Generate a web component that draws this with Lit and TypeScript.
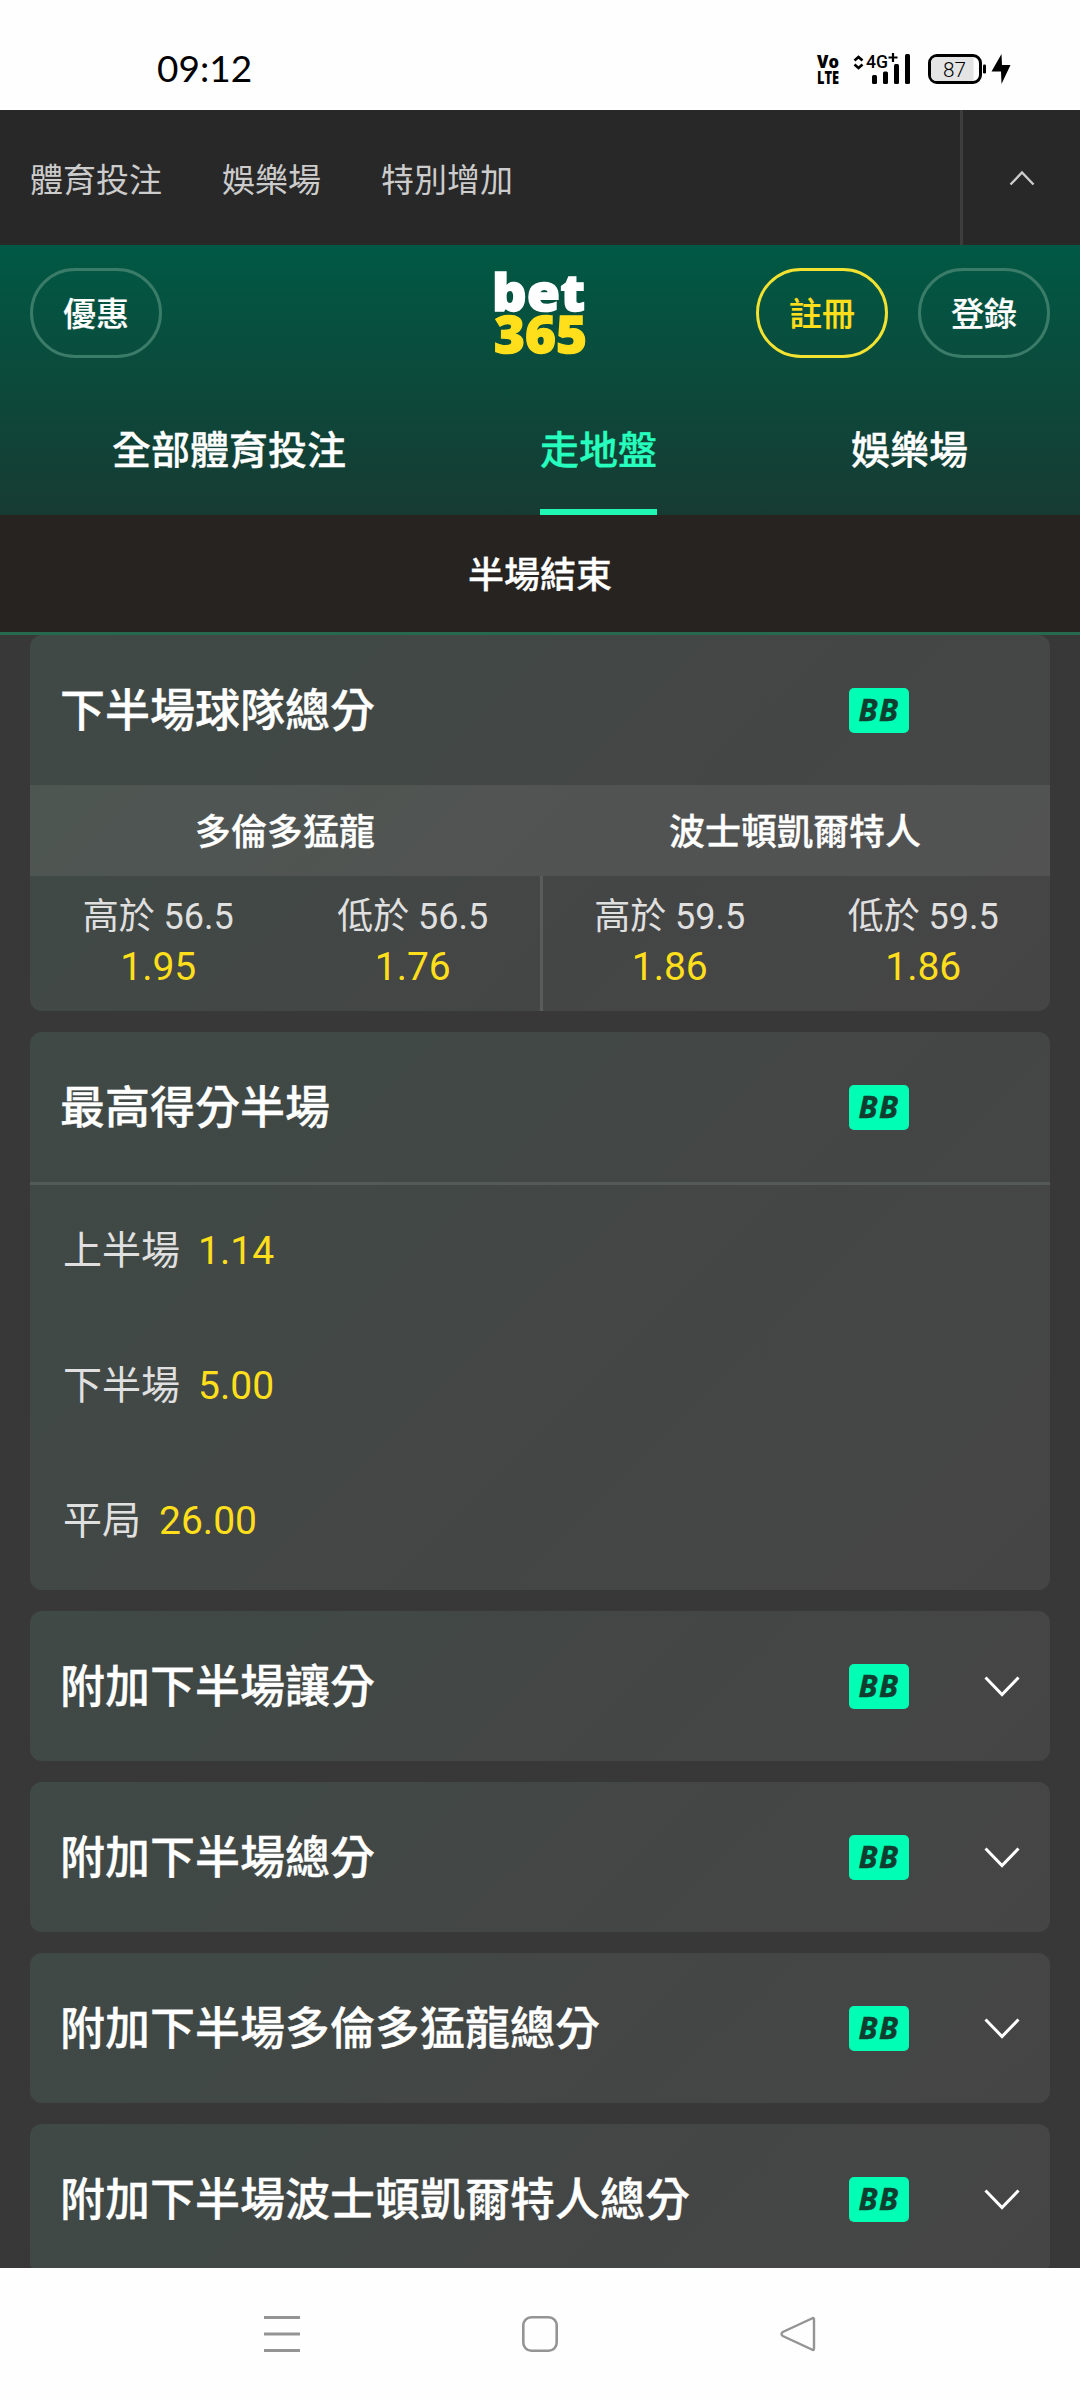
import { LitElement, html, css, nothing } from "lit";
import { customElement, property } from "lit/decorators.js";

@customElement("bb-badge")
class BbBadge extends LitElement {
  static styles = css`
    :host { display: block; width: 60px; height: 45px; }
    .badge { display: block; overflow: visible; }
    .letters { font-family: "Open Sans", sans-serif; font-weight: 700; font-style: italic; font-size: 31px; fill: #0f3d2f; stroke: #0f3d2f; stroke-width: 0.5px; letter-spacing: 1.5px; }
  `;
  render() {
    return html`<svg class="badge" width="60" height="45" viewBox="0 0 60 45">
      <rect width="60" height="45" rx="5" fill="#00ffb4" />
      <text class="letters" x="9.5" y="33" textLength="41" lengthAdjust="spacingAndGlyphs">BB</text>
    </svg>`;
  }
}

@customElement("market-card")
class MarketCard extends LitElement {
  @property() name = "";
  @property({ type: Boolean }) collapsed = false;

  static styles = css`
    :host { display: block; flex: none; }
    .card {
      border-radius: 12px;
      overflow: hidden;
      background: linear-gradient(135deg, #3f4945 0%, #414845 30%, #444645 60%, #454545 100%);
    }
    .head { display: flex; align-items: center; height: 150px; padding: 0 30px; }
    .name { flex: 1; padding-top: 3px; font-size: 45px; line-height: 60px; font-weight: 500; color: #fff; white-space: nowrap; -webkit-text-stroke: 0.3px currentColor; }
    .toggle { display: flex; width: 111px; justify-content: flex-end; }
    .chevron { display: block; }
  `;
  render() {
    return html`<section class="card">
      <header class="head">
        <div class="name">${this.name}</div>
        <bb-badge></bb-badge>
        <div class="toggle">
          ${this.collapsed
            ? html`<svg class="chevron" width="36" height="22" viewBox="0 0 36 22">
                <path d="M1.5 2.5 18 19.5 34.5 2.5" fill="none" stroke="#fff" stroke-width="3" />
              </svg>`
            : nothing}
        </div>
      </header>
      <slot></slot>
    </section>`;
  }
}

const TEAMS = [
  { team: "多倫多猛龍", picks: [["高於 56.5", "1.95"], ["低於 56.5", "1.76"]] },
  { team: "波士頓凱爾特人", picks: [["高於 59.5", "1.86"], ["低於 59.5", "1.86"]] },
];
const HALVES = [["上半場", "1.14"], ["下半場", "5.00"], ["平局", "26.00"]];
const MORE = ["附加下半場讓分", "附加下半場總分", "附加下半場多倫多猛龍總分", "附加下半場波士頓凱爾特人總分"];

@customElement("app-root")
class AppRoot extends LitElement {
  static styles = css`
    :host {
      display: flex;
      flex-direction: column;
      width: 1080px;
      height: 2400px;
      overflow: hidden;
      background: #383838;
      font-family: Roboto, "Noto Sans CJK TC", sans-serif;
    }
    .status { display: flex; flex: none; height: 110px; background: #fefefe; align-items: center; justify-content: space-between; padding: 28px 68px 0 157px; box-sizing: border-box; }
    .status svg { overflow: visible; }
    .clock { padding-bottom: 3px; font-family: Lato, sans-serif; font-size: 37px; line-height: 44px; color: #000; }
    .tiny { font-family: "Open Sans", sans-serif; font-weight: 800; font-size: 18px; }
    .net { font-family: Roboto, sans-serif; font-weight: 500; font-size: 18.5px; }
    .level { font-family: Roboto, sans-serif; font-weight: 300; font-size: 21px; }
    .products { display: flex; flex: none; height: 135px; background: #282828; align-items: stretch; }
    .links { display: flex; flex: 1; align-items: center; gap: 60px; padding-left: 30px; font-size: 33px; color: #ccc; }
    .up { display: flex; width: 117px; border-left: 3px solid #3d3d3d; align-items: center; justify-content: center; }
    .header { display: flex; flex: none; flex-direction: column; height: 270px; background: linear-gradient(#005944, #173b33); }
    .bar { display: grid; grid-template-columns: 1fr 90px 1fr; height: 136px; padding: 0 30px; align-items: center; }
    .side { display: flex; gap: 30px; }
    .end { justify-content: flex-end; }
    .pill { display: flex; box-sizing: border-box; width: 132px; height: 90px; border: 3px solid #3b7c69; border-radius: 45px; align-items: center; justify-content: center; padding-top: 4px; font-size: 33px; line-height: 40px; font-weight: 500; color: #fff; -webkit-text-stroke: 0.2px currentColor; }
    .join { color: #ffdf1b; border-color: #f2e232; }
    .logo { display: block; overflow: visible; }
    .wordmark { font-family: "Open Sans", sans-serif; font-weight: 800; font-size: 51px; }
    .tabs { display: flex; flex: 1; justify-content: space-between; padding: 0 112px; }
    .tab { display: flex; box-sizing: border-box; align-items: center; font-size: 39px; font-weight: 500; color: #fff; border-bottom: 6px solid transparent; padding-top: 4px; -webkit-text-stroke: 0.3px currentColor; }
    .tab.active { color: #26ffbe; border-bottom-color: #1ff7b2; }
    .period { display: flex; flex: none; box-sizing: border-box; height: 120px; padding-bottom: 3px; border-bottom: 3px solid #27694f; background: #262321; color: #fff; align-items: center; justify-content: center; font-size: 36px; font-weight: 500; -webkit-text-stroke: 0.3px currentColor; }
    .markets { display: flex; flex: 1; min-height: 0; flex-direction: column; gap: 21px; padding: 0 30px; overflow: hidden; }
    .teams { display: flex; }
    .half { display: flex; flex: 1 1 0; flex-direction: column; }
    .team { display: flex; box-sizing: border-box; height: 91px; padding-bottom: 4px; align-items: center; justify-content: center; background: rgba(255, 255, 255, 0.075); font-size: 36px; font-weight: 500; color: #fff; -webkit-text-stroke: 0.3px currentColor; }
    .picks { display: flex; height: 135px; box-sizing: border-box; padding-left: 1px; }
    .half + .half .picks { padding-left: 0; border-left: 3px solid #5a5c5b; }
    .pick { display: flex; flex: 1; flex-direction: column; align-items: center; padding-top: 17px; }
    .label { font-size: 36px; line-height: 48px; color: #e0e0e0; }
    .price { font-size: 39px; line-height: 53px; color: #ffdf1b; }
    .list { border-top: 3px solid #545a57; }
    .row { display: flex; height: 135px; align-items: center; gap: 18px; padding-left: 33px; }
    .row .label, .row .price { font-size: 39px; line-height: 56px; padding-bottom: 3px; }
    .nav { display: flex; flex: none; height: 132px; background: #fefefe; align-items: center; justify-content: center; gap: 222px; }
    .nav svg { display: block; }
  `;

  render() {
    return html`
      <div class="status">
        <div class="clock">09:12</div>
        <svg width="196" height="34" viewBox="816 52 196 34">
          <text class="tiny" x="817" y="68" textLength="22" lengthAdjust="spacingAndGlyphs">Vo</text>
          <text class="tiny" x="817" y="84" textLength="22" lengthAdjust="spacingAndGlyphs">LTE</text>
          <path d="M854.5 60.5 858.5 57 862.5 60.5M854.5 64.5 858.5 68 862.5 64.5" fill="none" stroke="#000" stroke-width="2.6" />
          <text class="net" x="866" y="68" textLength="22" lengthAdjust="spacingAndGlyphs">4G</text>
          <path d="M893 53v9M888.5 57.5h9" stroke="#000" stroke-width="2.2" />
          <rect x="872" y="75" width="5" height="9" rx="1.5" />
          <rect x="883" y="71.5" width="5" height="12.5" rx="1.5" />
          <rect x="894" y="64" width="5" height="20" rx="1.5" />
          <rect x="905" y="54" width="5" height="30" rx="1.5" />
          <rect x="929.5" y="55.5" width="51" height="27" rx="7.5" fill="#fefefe" stroke="#000" stroke-width="3" />
          <path d="M973.5 57v24H937q-6 0-6-6V63q0-6 6-6z" fill="#e4e4e4" />
          <text class="level" x="943" y="76.5" textLength="23" lengthAdjust="spacingAndGlyphs">87</text>
          <rect x="983" y="64.5" width="3" height="9" rx="1.2" />
          <path d="M1001.5 54 991.5 71.5h9.5l.5 12.5 9-19h-8.5z" />
        </svg>
      </div>
      <div class="products">
        <div class="links"><span>體育投注</span><span>娛樂場</span><span>特別增加</span></div>
        <div class="up">
          <svg width="26" height="16" viewBox="0 0 26 16"><path d="M1.5 14.5 13 2.5 24.5 14.5" fill="none" stroke="#ccc" stroke-width="2.4" /></svg>
        </div>
      </div>
      <div class="header">
        <div class="bar">
          <div class="side"><div class="pill">優惠</div></div>
          <svg class="logo" width="90" height="86" viewBox="495 270 90 86">
            <text class="wordmark" x="492" y="311" textLength="93" lengthAdjust="spacingAndGlyphs" fill="#fff" stroke="#fff" stroke-width="1.4">bet</text>
            <text class="wordmark" x="494" y="353" textLength="93" lengthAdjust="spacingAndGlyphs" fill="#ffdf1b" stroke="#ffdf1b" stroke-width="1.4">365</text>
          </svg>
          <div class="side end"><div class="pill join">註冊</div><div class="pill">登錄</div></div>
        </div>
        <div class="tabs">
          <div class="tab">全部體育投注</div>
          <div class="tab active">走地盤</div>
          <div class="tab">娛樂場</div>
        </div>
      </div>
      <div class="period">半場結束</div>
      <div class="markets">
        <market-card name="下半場球隊總分">
          <div class="teams">
            ${TEAMS.map(
              (t) => html`<div class="half">
                <div class="team">${t.team}</div>
                <div class="picks">
                  ${t.picks.map(([l, p]) => html`<div class="pick"><div class="label">${l}</div><div class="price">${p}</div></div>`)}
                </div>
              </div>`
            )}
          </div>
        </market-card>
        <market-card name="最高得分半場">
          <div class="list">
            ${HALVES.map(([l, p]) => html`<div class="row"><div class="label">${l}</div><div class="price">${p}</div></div>`)}
          </div>
        </market-card>
        ${MORE.map((n) => html`<market-card name=${n} collapsed></market-card>`)}
      </div>
      <div class="nav">
        <svg width="36" height="36" viewBox="0 0 36 36"><path d="M0 1.5h36M0 18h36M0 34.5h36" stroke="#949494" stroke-width="3" /></svg>
        <svg width="36" height="36" viewBox="0 0 36 36"><rect x="1.3" y="1.3" width="33.4" height="33.4" rx="8" fill="none" stroke="#949494" stroke-width="2.6" /></svg>
        <svg width="36" height="36" viewBox="0 0 36 36"><path d="M34 3.5v29q0 2.5-2.2 1L2.8 20q-2.6-2 0-4L31.8 2.5q2.2-1.5 2.2 1z" fill="none" stroke="#949494" stroke-width="2.4" /></svg>
      </div>
    `;
  }
}
